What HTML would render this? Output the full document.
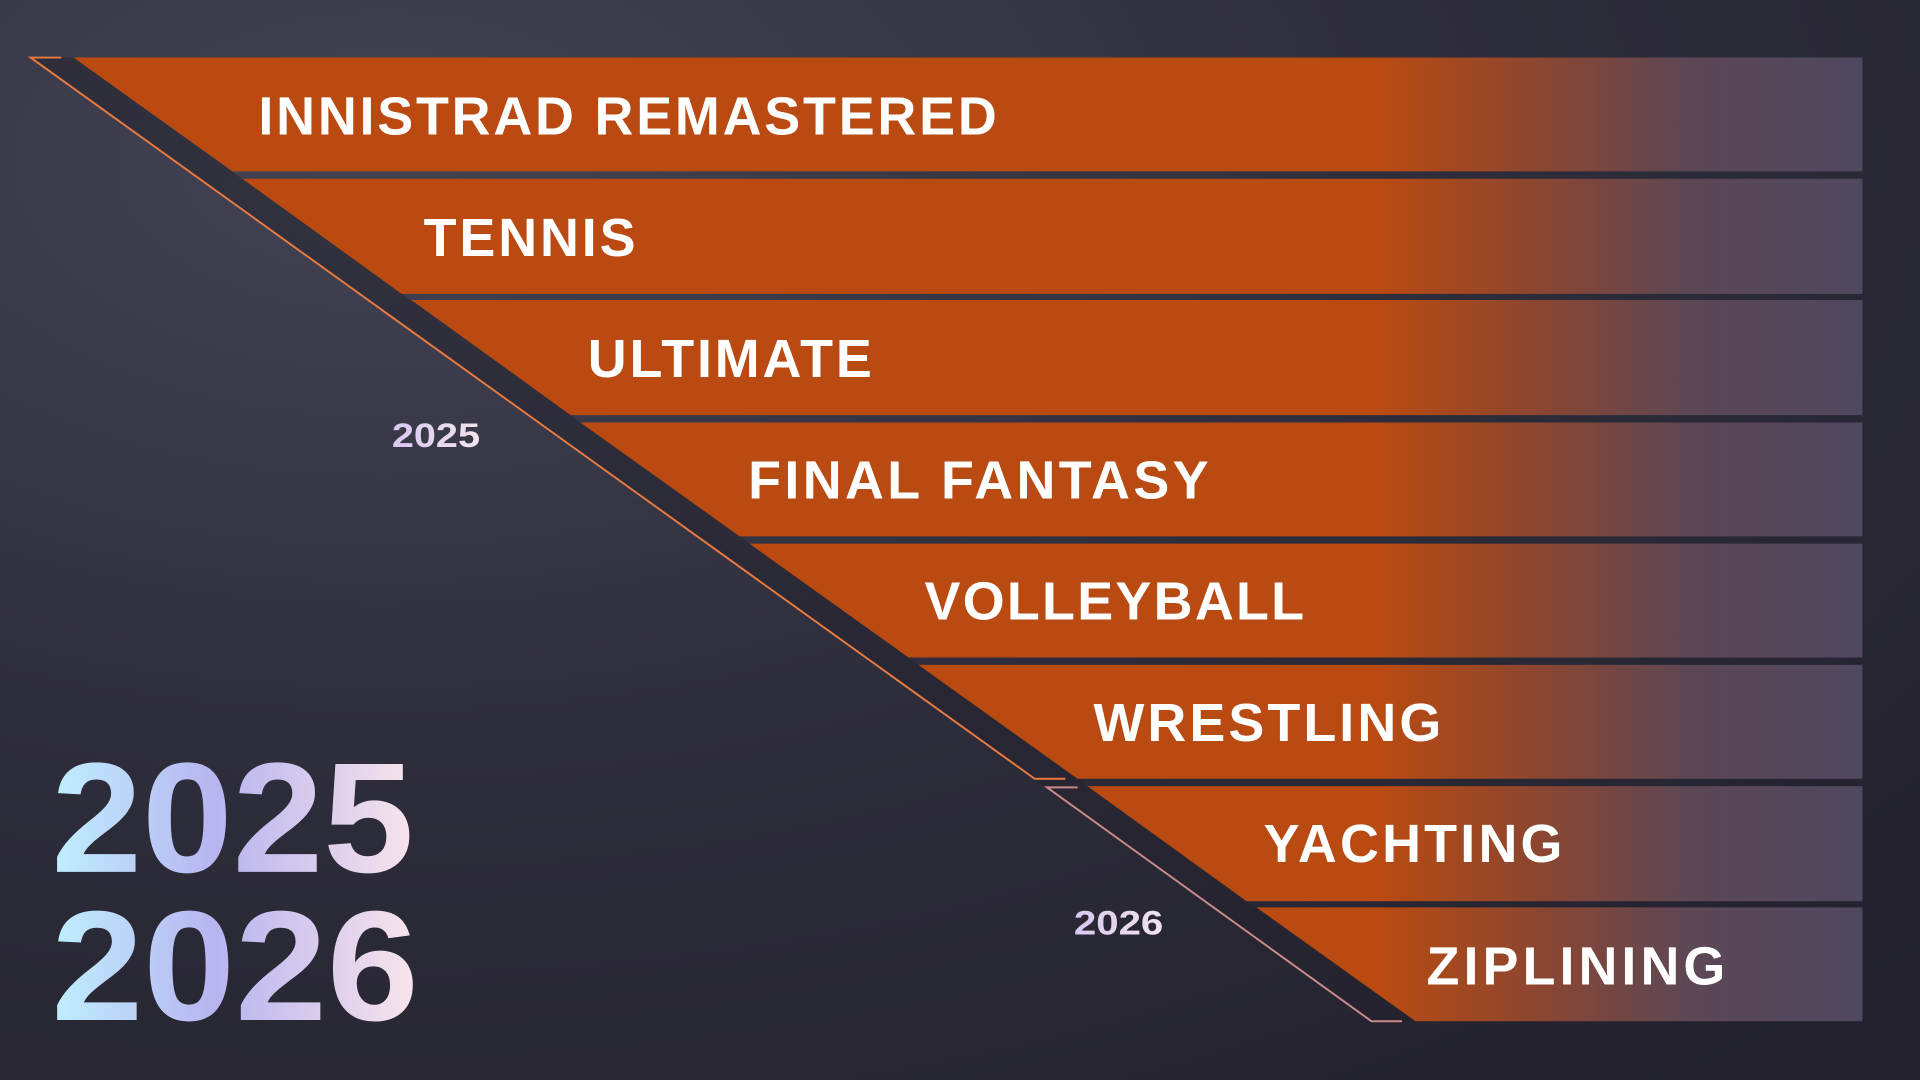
<!DOCTYPE html>
<html><head><meta charset="utf-8"><style>
html,body{margin:0;padding:0;width:1920px;height:1080px;overflow:hidden;background:#2a2a38}
svg{display:block}
</style></head><body>
<svg width="1920" height="1080" viewBox="0 0 1568 882" preserveAspectRatio="none" xmlns="http://www.w3.org/2000/svg">
<defs>
<radialGradient id="bg" cx="0.2" cy="0.15" r="1.1">
<stop offset="0" stop-color="#434354"/><stop offset="0.5" stop-color="#2e2d3b"/><stop offset="1" stop-color="#22212c"/>
</radialGradient>
<linearGradient id="band" x1="0" y1="0" x2="1568" y2="0" gradientUnits="userSpaceOnUse">
<stop offset="0" stop-color="#bb4a10"/><stop offset="0.72" stop-color="#b84a12"/><stop offset="0.8" stop-color="#8c4630"/><stop offset="0.88" stop-color="#5c4755"/><stop offset="1" stop-color="#4b4862"/>
</linearGradient>
<linearGradient id="big" x1="40" y1="0" x2="345" y2="0" gradientUnits="userSpaceOnUse">
<stop offset="0" stop-color="#bff0ff"/><stop offset="0.45" stop-color="#b8b4f0"/><stop offset="1" stop-color="#fbe6ea"/>
</linearGradient>
<linearGradient id="sm" x1="0" y1="0" x2="1" y2="0">
<stop offset="0" stop-color="#d8c8f0"/><stop offset="1" stop-color="#f2e4ee"/>
</linearGradient>
</defs>
<rect width="1568" height="882" fill="url(#bg)"/>
<polygon points="25,47 60,47 1155,834 1120,834" fill="#24232e" opacity="0.55"/>
<g fill="url(#band)">
<polygon points="60,47 1521,47 1521,140 190,140"/>
<polygon points="198,146 1521,146 1521,240 328,240"/>
<polygon points="336,245 1521,245 1521,339 466,339"/>
<polygon points="474,345 1521,345 1521,438 604,438"/>
<polygon points="612,444 1521,444 1521,537 742,537"/>
<polygon points="750,543 1521,543 1521,636 880,636"/>
<polygon points="888,642 1521,642 1521,736 1018,736"/>
<polygon points="1026,741 1521,741 1521,834 1156,834"/>
</g>
<polyline points="50,47 25,47 845,636 870,636" fill="none" stroke="#e87a40" stroke-width="1.6"/>
<polyline points="880,643 855,643 1120,834 1145,834" fill="none" stroke="#c98a8a" stroke-width="1.6"/>
<g font-family="Liberation Sans, sans-serif" font-weight="bold" fill="#fff" font-size="44">
<text x="211" y="110" textLength="603">INNISTRAD REMASTERED</text>
<text x="346" y="209" textLength="173">TENNIS</text>
<text x="480" y="308" textLength="232">ULTIMATE</text>
<text x="611" y="407" textLength="376">FINAL FANTASY</text>
<text x="755" y="506" textLength="310">VOLLEYBALL</text>
<text x="893" y="605" textLength="284">WRESTLING</text>
<text x="1032" y="704" textLength="244">YACHTING</text>
<text x="1165" y="804" textLength="244">ZIPLINING</text>
</g>
<g font-family="Liberation Sans, sans-serif" font-weight="bold" fill="url(#sm)" font-size="28">
<text x="320" y="365" textLength="72" lengthAdjust="spacingAndGlyphs">2025</text>
<text x="877" y="763" textLength="73" lengthAdjust="spacingAndGlyphs">2026</text>
</g>
<g font-family="Liberation Sans, sans-serif" font-weight="bold" fill="url(#big)" font-size="128">
<text x="42" y="712" textLength="296" lengthAdjust="spacingAndGlyphs">2025</text>
<text x="42" y="833" textLength="300" lengthAdjust="spacingAndGlyphs">2026</text>
</g>
</svg>
</body></html>
